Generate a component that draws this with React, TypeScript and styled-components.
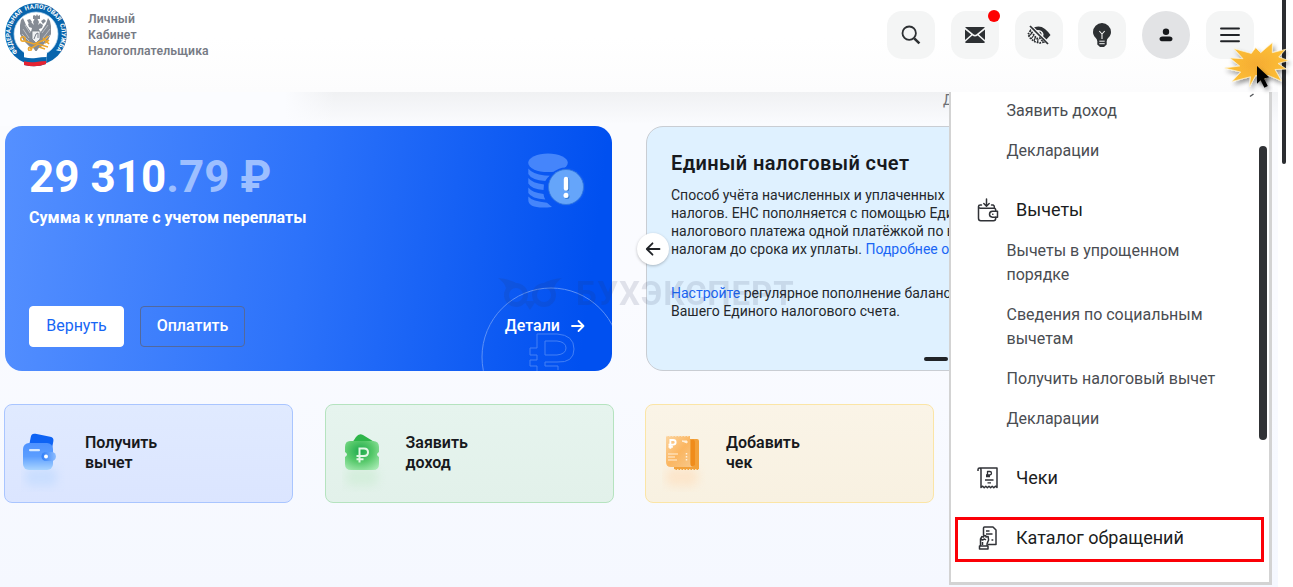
import React from 'react';
import styled, { createGlobalStyle } from 'styled-components';

const Global = createGlobalStyle`
  * { box-sizing: border-box; }
  body { margin: 0; background: #fff; font-family: Roboto, "Liberation Sans", sans-serif; color: #17191d; overflow: hidden; }
  button { font-family: inherit; cursor: pointer; }
  svg { display: block; flex: none; }
`;

const Screen = styled.div`
  position: relative;
  width: 1293px;
  height: 587px;
  overflow: hidden;
  background: #fff;
`;

const Page = styled.div`
  width: 1278px;
  height: 587px;
  display: flex;
  flex-direction: column;
  overflow: hidden;
`;

const Header = styled.header`
  flex: none;
  height: 92px;
  padding: 3px 24px 0 5px;
  display: flex;
  justify-content: space-between;
  background: linear-gradient(#fff 40%, #fcfcfd);
`;

const Brand = styled.div`
  display: flex;
  align-items: flex-start;
  gap: 21px;
`;

const BrandName = styled.div`
  margin-top: 8px;
  font-size: 12.2px;
  line-height: 16px;
  font-weight: 600;
  letter-spacing: 0.15px;
  color: #777b85;
`;

const Actions = styled.nav`
  display: flex;
  gap: 15.8px;
  padding-top: 8px;
`;

const IconButton = styled.button<{ $round?: boolean }>`
  position: relative;
  width: 48px;
  height: 48px;
  padding: 0;
  border: 0;
  border-radius: ${p => (p.$round ? '50%' : '15px')};
  background: ${p => (p.$round ? '#e2e3e5' : '#f4f5f5')};
  display: flex;
  align-items: center;
  justify-content: center;
`;

const Unread = styled.span`
  position: absolute;
  top: -1px;
  right: -1px;
  width: 12px;
  height: 12px;
  border-radius: 50%;
  background: #fe0000;
`;

const Main = styled.main`
  flex: 1;
  padding: 34px 0 0 5px;
  background:
    linear-gradient(90deg, #fbfcff 285px, rgba(251, 252, 255, 0) 335px) 0 0 / 335px 34px no-repeat,
    linear-gradient(#f0f1f3, #fafbfe 32px, #fafbff 40%, #f5f8ff);
`;

const Summary = styled.section`
  display: flex;
  gap: 34px;
`;

const DebtCard = styled.article`
  position: relative;
  flex: none;
  width: 607px;
  height: 244.5px;
  padding: 26px 27px 24px 24px;
  border-radius: 17px;
  overflow: hidden;
  display: flex;
  flex-direction: column;
  justify-content: space-between;
  color: #fff;
  background: linear-gradient(97deg, #5590ff 0%, #2c72fa 49%, #0050f0 95%);
`;

const CardRow = styled.div<{ $bottom?: boolean }>`
  position: relative;
  display: flex;
  justify-content: space-between;
  align-items: ${p => (p.$bottom ? 'center' : 'flex-start')};
`;

const Amount = styled.div`
  font-size: 44px;
  line-height: 50px;
  font-weight: 700;
  white-space: nowrap;
  span { color: #9dbfff; }
`;

const AmountNote = styled.div`
  margin-top: 6px;
  font-size: 16px;
  line-height: 20px;
  font-weight: 700;
`;

const CoinsSlot = styled.div`
  padding-top: 1px;
`;

const CardButtons = styled.div`
  display: flex;
  gap: 16px;
`;

const CardButton = styled.button<{ $filled?: boolean }>`
  width: ${p => (p.$filled ? '95px' : '105px')};
  height: 41px;
  padding: 0 0 1px;
  border-radius: 4px;
  border: 1px solid ${p => (p.$filled ? '#fff' : '#53699c')};
  background: ${p => (p.$filled ? '#fff' : 'transparent')};
  color: ${p => (p.$filled ? '#1766f5' : '#fff')};
  font-size: 16px;
  font-weight: ${p => (p.$filled ? 400 : 500)};
`;

const DetailsLink = styled.a`
  display: flex;
  align-items: center;
  gap: 10px;
  padding: 0 0 1px;
  margin-right: -1px;
  font-size: 16px;
  font-weight: 500;
`;

const CoinOutline = styled.svg`
  position: absolute;
  left: 476px;
  top: 161px;
`;

const AccountCard = styled.article`
  position: relative;
  flex: none;
  width: 607px;
  height: 244.5px;
  padding: 24px;
  border: 1px solid #c9cdd3;
  border-radius: 17px;
  background: #dff1ff;
`;

const AccountTitle = styled.h2`
  margin: 0 0 10px;
  font-size: 20px;
  line-height: 25px;
  font-weight: 600;
  letter-spacing: 0.42px;
`;

const Paragraph = styled.p`
  margin: 0 0 26px;
  font-size: 14px;
  line-height: 18px;
  color: #25282c;
  white-space: nowrap;
  a { color: #1a66f5; }
`;

const BackButton = styled.button`
  position: absolute;
  left: -10px;
  top: 106px;
  width: 32px;
  height: 32px;
  padding: 0;
  border: 0;
  border-radius: 50%;
  background: #fff;
  box-shadow: 0 1px 3px rgba(0, 0, 0, 0.25);
  display: flex;
  align-items: center;
  justify-content: center;
`;

const SlideMark = styled.span`
  position: absolute;
  left: 277px;
  bottom: 9px;
  width: 24px;
  height: 4px;
  border-radius: 2px;
  background: #202327;
`;

const Tiles = styled.section`
  margin: 33px 0 0 -1px;
  display: flex;
  gap: 31.5px;
`;

const Tile = styled.article<{ $line: string; $from: string; $to: string }>`
  width: 289px;
  height: 99.5px;
  padding: 0 16px;
  border: 1px solid ${p => p.$line};
  border-radius: 8px;
  background: linear-gradient(${p => p.$from}, ${p => p.$to});
  display: flex;
  align-items: center;
  gap: 20px;
  svg { margin-top: 6px; }
`;

const TileTitle = styled.h3`
  margin: 0 0 1px;
  font-size: 16px;
  line-height: 20px;
  font-weight: 600;
`;

const Watermark = styled.div`
  position: absolute;
  left: 498px;
  top: 274px;
  display: flex;
  align-items: center;
  gap: 14px;
  font-size: 33px;
  line-height: 39px;
  font-weight: 700;
  letter-spacing: 0.9px;
  color: #28325a;
  opacity: 0.12;
  pointer-events: none;
`;

const Hidden = styled.div`
  position: absolute;
  left: 943px;
  top: 92px;
  font-size: 14px;
  line-height: 16px;
  color: #6c6f75;
`;

const Menu = styled.aside`
  position: absolute;
  left: 949px;
  top: 92px;
  width: 323px;
  height: 493px;
  padding: 7px 4px 0 4px;
  border: solid #d3d3d3;
  border-width: 0 3px 3px 2px;
  background: #fff;
`;

const MenuItem = styled.a`
  display: block;
  margin: 0 20px 16px 51.5px;
  font-size: 16px;
  line-height: 24px;
  color: #4a4d52;
`;

const MenuHeading = styled.a<{ $first?: boolean; $framed?: boolean }>`
  display: flex;
  align-items: center;
  gap: 17px;
  height: ${p => (p.$framed ? '45px' : '30px')};
  width: 309px;
  margin: ${p => (p.$framed ? '24px 0 0' : p.$first ? '32px 0 14px' : '32px 0 0')};
  padding: ${p => (p.$framed ? '0 0 4px 19px' : '0 0 0 22px')};
  border: ${p => (p.$framed ? '3px solid #fb0007' : '0')};
  font-size: 18px;
  line-height: 24px;
  color: #1b1d21;
`;

const MenuScroll = styled.span`
  position: absolute;
  right: 2px;
  top: 54px;
  width: 8px;
  height: 294px;
  border-radius: 4px;
  background: #303235;
`;

const CollapseMark = styled.svg`
  position: absolute;
  right: 14px;
  top: 0;
`;

const PageScroll = styled.span`
  position: absolute;
  left: 1282px;
  top: -4px;
  width: 4px;
  height: 168px;
  border-radius: 2px;
  background: #2b2d31;
`;

const Burst = styled.svg`
  position: absolute;
  left: 1222px;
  top: 40px;
`;

const Emblem = () => (
  <svg width="62" height="64" viewBox="0 0 62 64">
    <circle cx="31" cy="31" r="30.8" fill="#0865ad" />
    <circle cx="31" cy="31" r="22" fill="#fff" stroke="#b8d7ee" strokeWidth="0.7" />
    <defs>
      <path id="ring" d="M13.500 49.800A25.600 25.600 0 1 1 49.100 49.300" />
      <clipPath id="badge"><path d="M19 49Q28 46 42 50L41 61Q31 65 19 62Z" /></clipPath>
    </defs>
    <text fontSize="6.2" fontWeight="700" fill="#fff" fontFamily="Roboto, sans-serif" wordSpacing="1.500">
      <textPath href="#ring" startOffset="1" textLength="117">ФЕДЕРАЛЬНАЯ НАЛОГОВАЯ СЛУЖБА</textPath>
    </text>
    <g fill="#858b94">
      <path d="M29 22l-1-3 2-4h2l2 4-1 3 2-2 3 2-1 3-3 1 1 4 6-9 2-6 2 3 1 5 0 8-3 6-5 5-2 2-5 2-6-2-6-6-4-7 0-9 1-5 2-2 3 7 5 7 1-4-3-1-1-3 3-2z" />
      <path d="M28 13l1-1 2 1 1-2 1 2 2-1 0 4h-7zM22 17l3-1 2 3-3 2zM36 18l3-2 2 2-3 3zM27 43h8l-4 6z" />
    </g>
    <path d="M18 26l6 9M17 31l7 7M45 26l-7 9M45 32l-7 7M20 22l5 8M43 22l-6 8" stroke="#d3d6da" strokeWidth="0.7" />
    <path d="M27 28h8v8l-4 4-4-4z" fill="#f0f2f4" stroke="#777d87" strokeWidth="0.8" />
    <path d="M29 36l2-5 2-1 0 5" fill="none" stroke="#777d87" />
    <g fill="none" stroke="#eca62d" strokeWidth="1.6">
      <circle cx="18" cy="36" r="2.2" /><path d="M20 38l9 3 10-4 4-4M25 46l8-5 10 3M38 35l6 6M40 40l4-3M34 44l6 2" />
      <circle cx="25" cy="46" r="1.6" />
    </g>
    <g clipPath="url(#badge)">
      <path d="M18 44h26v20H18z" fill="#fff" />
      <path d="M18 54q7 2 13 1t13-1v11H18z" fill="#0865ad" />
      <path d="M18 58q7 2 13 1t13-1v8H18z" fill="#e52332" />
    </g>
  </svg>
);

const SearchIcon = () => (
  <svg width="22" height="22" viewBox="0 0 22 22" fill="none" stroke="#2d3033">
    <circle cx="9.200" cy="9.200" r="6.700" strokeWidth="1.800" /><path d="M14.200 14.400l5.200 5" strokeWidth="2.600" />
  </svg>
);

const MailIcon = () => (
  <svg width="20" height="16" viewBox="0 0 20 16" fill="#2d3033">
    <path d="M1 0h18q.7 0 .8.6L11.5 7.2q-1.500 1-3 0L.2.6Q.4 0 1 0zM0 2.600L6.200 7.500 0 13zM20 2.600L13.800 7.500 20 13zM7.300 8.500q2.700 1.800 5.400 0L20 14.900q-.3 1.100-1.500 1.100h-17Q.3 16 0 14.900z" />
  </svg>
);

const EyeIcon = () => (
  <svg width="26" height="20" viewBox="0 0 26 20">
    <path d="M6 3.500Q13-.5 19 4q3 2.500 5.500 6l-5 5.500-3-3q2-3-.5-5.500-2-1.500-4.500-.5z" fill="#2d3033" />
    <path d="M11 5q5-.5 6.500 4l-1 3-2.500-2.500q0-2-2.500-2z" fill="#f4f5f5" />
    <path d="M13.500 6.500q2.500 1 2 3.500l-1.200-1q0-1-1-1.500z" fill="#2d3033" />
    <path d="M4.500 5.500L2 9.500l2.500 4 4 3 5 1.500 4-1-4-4-3 .5-3-4z" fill="none" stroke="#2d3033" strokeWidth="1.700" strokeDasharray="1.700 1.100" />
    <path d="M3 11l3-3M5 14l3-4M8 16l1.500-4M11.500 18l.5-4" stroke="#2d3033" strokeWidth="1.200" />
    <path d="M5.500.8L23 18" stroke="#f4f5f5" strokeWidth="1.500" />
    <path d="M4 1l18 18" stroke="#2d3033" strokeWidth="1.700" />
  </svg>
);

const BulbIcon = () => (
  <svg width="20" height="26" viewBox="0 0 20 26">
    <path d="M10 1a9 9 0 0 1 9 9c0 4.500-3.500 5.500-4.500 9h-9C4.500 15.500 1 14.500 1 10a9 9 0 0 1 9-9z" fill="#2d3033" />
    <path d="M7.300 9l2.700 3 2.700-3M10 12v5" fill="none" stroke="#f4f5f5" strokeWidth="1.100" />
    <path d="M5.300 17h9.400v5.500L12 25H8l-2.700-2.500z" fill="#2d3033" />
    <path d="M7.300 19.200h5.400M7.300 21.700h5.400" stroke="#f4f5f5" strokeWidth="1" />
  </svg>
);

const UserIcon = () => (
  <svg width="14" height="14" viewBox="0 0 14 14" fill="#16181b">
    <circle cx="7" cy="3.700" r="3.200" /><path d="M3.500 8.500h7q3 .4 3 2.600 0 2.100-2 2.100h-9q-2 0-2-2.100 0-2.200 3-2.600z" />
  </svg>
);

const BurgerIcon = () => (
  <svg width="20" height="16" viewBox="0 0 20 16" stroke="#202327" strokeWidth="1.900" strokeLinecap="round">
    <path d="M1 1.500h18M1 8h18M1 14.300h18" />
  </svg>
);

const CoinsIcon = () => (
  <svg width="57" height="56" viewBox="0 0 57 56">
    <g fill="#4585fb">
      <ellipse cx="20" cy="9.800" rx="19.800" ry="9.300" />
      <path d="M.3 15.500q4 5.500 16.500 7l5 .3q-3 2.200-4.500 5.200Q3.500 27 .3 21zM.3 25q4 5 15.700 6.500l-.5 5.500Q3.500 36 .3 30.500zM.3 34.500Q4 39.500 15.500 41q.3 3 1.800 5.500Q3.500 45.500.3 40zM.3 43.500q4 5 18.700 6.200l5 4.300Q.3 56.500.3 47z" />
    </g>
    <circle cx="38" cy="34" r="19.500" fill="#0a57f2" />
    <circle cx="38" cy="34" r="17.500" fill="#65a5fa" stroke="#3478dc" strokeWidth="0.800" />
    <g transform="translate(1 1)" stroke="#377bd0" strokeLinecap="round"><path d="M38 26v9" strokeWidth="4.500" /><path d="M38 42.500v.1" strokeWidth="5" /></g>
    <g stroke="#fff" strokeLinecap="round"><path d="M38 26v9.500" strokeWidth="4.400" /><path d="M38 42.300v.1" strokeWidth="5" /></g>
  </svg>
);

const WalletTileIcon = () => (
  <svg width="44" height="72" viewBox="0 0 44 72">
    <defs>
      <linearGradient id="wb" x2="0" y2="1"><stop stopColor="#4e92ff" /><stop offset=".5" stopColor="#5c9eff" /><stop offset="1" stopColor="#a9d4ff" /></linearGradient>
      <linearGradient id="wl"><stop stopColor="#2e7df8" /><stop offset="1" stopColor="#8ebdff" /></linearGradient>
      <filter id="soft" x="-50%" y="-50%" width="200%" height="200%"><feGaussianBlur stdDeviation="5" /></filter>
    </defs>
    <rect x="4" y="48" width="32" height="18" rx="6" fill="#b7d6ff" opacity=".5" filter="url(#soft)" />
    <rect x="9" y="15" width="23" height="18" rx="4" transform="rotate(11 20 22)" fill="#0e63f4" />
    <rect x="2" y="23" width="30" height="27" rx="6" fill="url(#wb)" />
    <rect x="8" y="29" width="11" height="2.300" rx="1" fill="#d7eaff" />
    <rect x="20.500" y="32" width="14.500" height="9" rx="4.500" fill="url(#wl)" />
    <circle cx="25" cy="36.500" r="2" fill="#fff" />
  </svg>
);

const RublePath = ({ color, width = 2 }: { color: string; width?: number }) => (
  <path d="M3 14V0h4.500q4 0 4 3.700t-4 3.800H0M0 10.800h7" fill="none" stroke={color} strokeWidth={width} />
);

const IncomeTileIcon = () => (
  <svg width="44" height="72" viewBox="0 0 44 72">
    <defs>
      <radialGradient id="ib" cx=".45" cy=".35" r=".75"><stop stopColor="#1daa4c" /><stop offset=".5" stopColor="#57c96b" /><stop offset="1" stopColor="#a4e9b0" /></radialGradient>
    </defs>
    <rect x="4" y="48" width="32" height="18" rx="6" fill="#bfe9c6" opacity=".4" filter="url(#soft)" />
    <path d="M10 23l4-6q3-4 7-2l13 8z" fill="#2eb54a" />
    <path d="M8 21h23q6 0 6 6v5q-4 2.500 0 5v7q0 6-6 6H9q-6 0-6-6v-7q4-2.500 0-5v-5q0-6 5-6z" fill="url(#ib)" />
    <g transform="translate(14.500 28.500)"><RublePath color="#e3f8e6" /></g>
  </svg>
);

const ReceiptTileIcon = () => (
  <svg width="44" height="72" viewBox="0 0 44 72">
    <defs>
      <linearGradient id="rb" x2="1" y2="1"><stop stopColor="#fcd5a0" /><stop offset=".5" stopColor="#fbb661" /><stop offset="1" stopColor="#f7c98c" /></linearGradient>
    </defs>
    <rect x="4" y="48" width="32" height="18" rx="6" fill="#ffdcb8" opacity=".55" filter="url(#soft)" />
    <path d="M12 19h23q2 0 2 2v29H12z" fill="#f2a13a" />
    <path d="M12 49.500h25" stroke="#f7e5c4" strokeDasharray="1.500 1.500" strokeWidth="1" />
    <path d="M29 20q4-2 4 3v22l-4 2z" fill="#f08c1b" />
    <path d="M4 16h24v27q0 4 4 4H9q-5 0-5-5z" fill="url(#rb)" />
    <path d="M4 16h24" stroke="#f9efdd" strokeDasharray="1.500 1.500" />
    <g transform="translate(6.500 20) scale(.62)"><RublePath color="#fff" width={3} /></g>
    <path d="M6 34h10M6 37h7M6 40h9" stroke="#fff0da" strokeWidth="1" />
    <path d="M20 21h5v2z" fill="#fff0da" stroke="#fff0da" />
    <path d="M24.500 33v8" stroke="#fff0da" strokeDasharray="1.500 1.500" strokeWidth="1.500" />
  </svg>
);

const DeductIcon = () => (
  <svg width="22" height="24" viewBox="0 0 22 24" fill="none" stroke="#303237" strokeWidth="1.500" strokeLinecap="round" strokeLinejoin="round">
    <path d="M9.500 1v7M6.800 5.500l2.700 2.700 2.700-2.700M4.500 7H3.300Q1.500 7 1.500 8.500T3.300 10.200H17q1.700 0 1.700 1.800v1.200M1.500 8.500v11.700q0 2.500 2.300 2.500H16.500q2.200 0 2.200-2.500v-1M14.500 7h1.700q1.300.4 1.300 3" />
    <path d="M20.500 13.300h-5q-3 .3-3 3t3 3h5zM15.700 16.300h.2" />
  </svg>
);

const ReceiptIcon = () => (
  <svg width="22" height="24" viewBox="0 0 22 24" fill="none" stroke="#303237" strokeWidth="1.500" strokeLinejoin="round">
    <path d="M1 5V3.500Q1 2 2.700 2H20v19.500l-1.600-1.300-1.600 1.500-1.600-1.500-1.600 1.500-1.600-1.500-1.600 1.500-1.600-1.500-1.600 1.500-1.500-1.500L4 21.500V4Q4 2 2.700 2" />
    <path d="M10.500 11.300V5.500h2.200q1.800 0 1.800 1.700T12.700 9H9M9 10.500h4M8 14h8.500M10.500 16.800h3.500" strokeWidth="1.300" />
  </svg>
);

const AppealIcon = () => (
  <svg width="22" height="24" viewBox="0 0 22 24" fill="none" stroke="#303237" strokeWidth="1.500" strokeLinejoin="round">
    <path d="M6.500 9V2q0-1 1-1h8.500l3 3v14.500H11M9 5h3.500M9 8h6.500M14.500 14h1.800" />
    <path d="M3.500 20v-7l1.500-2.500 1.500.5.300-1.500 2 .2.300 1.300 2-.5.500 3.500-1.500 3.500V20M3.500 13l2 1 2-1 1.500 1M2.500 20h8.500v3H2.500zM5.500 16v3" />
  </svg>
);

const Arrow = ({ left }: { left?: boolean }) => (
  <svg width="16" height="16" viewBox="0 0 16 16" fill="none" stroke={left ? '#202327' : '#fff'} strokeWidth="1.800" strokeLinecap="round" strokeLinejoin="round">
    {left ? <path d="M14.500 8H2M7.500 2.300L1.800 8l5.700 5.700" /> : <path d="M2 8h11.500M8.500 3l5 5-5 5" />}
  </svg>
);

const actions = [
  { icon: <SearchIcon />, label: 'search' },
  { icon: <MailIcon />, label: 'mail', unread: true },
  { icon: <EyeIcon />, label: 'contrast' },
  { icon: <BulbIcon />, label: 'hints' },
  { icon: <UserIcon />, label: 'profile', round: true },
  { icon: <BurgerIcon />, label: 'menu' },
];

const tiles = [
  { icon: <WalletTileIcon />, a: 'Получить', b: 'вычет', line: '#a9c5ff', from: '#e0eaff', to: '#dbe5ff' },
  { icon: <IncomeTileIcon />, a: 'Заявить', b: 'доход', line: '#b5e3bf', from: '#e6f4ee', to: '#e2f1ea' },
  { icon: <ReceiptTileIcon />, a: 'Добавить', b: 'чек', line: '#fbe5a6', from: '#faf4e7', to: '#f8f1e1' },
];

export default function App() {
  return (
    <Screen>
      <Global />
      <Page>
        <Header>
          <Brand>
            <Emblem />
            <BrandName>Личный<br />Кабинет<br />Налогоплательщика</BrandName>
          </Brand>
          <Actions>
            {actions.map(a => (
              <IconButton key={a.label} aria-label={a.label} $round={a.round}>
                {a.icon}
                {a.unread && <Unread />}
              </IconButton>
            ))}
          </Actions>
        </Header>
        <Main>
          <Summary>
            <DebtCard>
              <CoinOutline width="131" height="84" viewBox="0 0 131 84" fill="none" stroke="#5d91f6">
                <circle cx="70" cy="70" r="69" />
                <path d="M56 84v-5h-7v-6h7v-5h-7v-7h7V47h20q17 1 17 15T76 75H64v4h13v4M64 68V54h12q9 1 9 7t-9 7z" stroke="#4480f5" />
              </CoinOutline>
              <CardRow>
                <div>
                  <Amount>29 310<span>.79 ₽</span></Amount>
                  <AmountNote>Сумма к уплате с учетом переплаты</AmountNote>
                </div>
                <CoinsSlot><CoinsIcon /></CoinsSlot>
              </CardRow>
              <CardRow $bottom>
                <CardButtons>
                  <CardButton $filled>Вернуть</CardButton>
                  <CardButton>Оплатить</CardButton>
                </CardButtons>
                <DetailsLink>Детали <Arrow /></DetailsLink>
              </CardRow>
            </DebtCard>
            <AccountCard>
              <AccountTitle>Единый налоговый счет</AccountTitle>
              <Paragraph>
                Способ учёта начисленных и уплаченных<br />
                налогов. ЕНС пополняется с помощью Единого<br />
                налогового платежа одной платёжкой по всем<br />
                налогам до срока их уплаты. <a>Подробнее о ЕНС</a>
              </Paragraph>
              <Paragraph>
                <a>Настройте</a> регулярное пополнение баланса<br />
                Вашего Единого налогового счета.
              </Paragraph>
              <BackButton aria-label="back"><Arrow left /></BackButton>
              <SlideMark />
            </AccountCard>
          </Summary>
          <Tiles>
            {tiles.map(t => (
              <Tile key={t.a} $line={t.line} $from={t.from} $to={t.to}>
                {t.icon}
                <TileTitle>{t.a}<br />{t.b}</TileTitle>
              </Tile>
            ))}
          </Tiles>
        </Main>
      </Page>
      <Watermark>
        <svg width="64" height="34" viewBox="0 0 64 34" fill="none" stroke="#28325a" strokeWidth="5">
          <circle cx="18" cy="18" r="9.500" /><circle cx="46" cy="18" r="9.500" />
          <path d="M0 1q12 1 20 6l-12 4Q6 5 0 1zM64 1q-12 1-20 6l12 4q2-6 8-10zM26 24l6 9 6-9z" fill="#28325a" stroke="none" />
        </svg>
        БУХЭКСПЕРТ
      </Watermark>
      <Hidden>Д</Hidden>
      <Menu>
        <MenuItem>Заявить доход</MenuItem>
        <MenuItem>Декларации</MenuItem>
        <MenuHeading $first><DeductIcon />Вычеты</MenuHeading>
        <MenuItem>Вычеты в упрощенном<br />порядке</MenuItem>
        <MenuItem>Сведения по социальным<br />вычетам</MenuItem>
        <MenuItem>Получить налоговый вычет</MenuItem>
        <MenuItem>Декларации</MenuItem>
        <MenuHeading><ReceiptIcon />Чеки</MenuHeading>
        <MenuHeading $framed><AppealIcon />Каталог обращений</MenuHeading>
        <MenuScroll />
        <CollapseMark width="6" height="6" viewBox="0 0 6 6"><path d="M1 4.500L4.500 2" stroke="#55585c" strokeWidth="1.500" /></CollapseMark>
      </Menu>
      <PageScroll />
      <Burst width="71" height="60" viewBox="0 0 71 60">
        <defs>
          <filter id="drop" x="-20%" y="-20%" width="150%" height="150%"><feDropShadow dx="2" dy="3" stdDeviation="2" floodOpacity=".4" /></filter>
          <radialGradient id="sun"><stop stopColor="#f5ac33" /><stop offset="1" stopColor="#fdbf35" /></radialGradient>
        </defs>
        <path filter="url(#drop)" fill="url(#sun)" stroke="#fff4d0" strokeWidth="0.700" d="M12 8.700L29.300 13.500 33.700 7.700 38.700 12.700 50.300 2.700 50.300 12.700 63.700 9.300 56.700 17 66.500 20.500 56 23.500 64.300 29 53 29.500 59.500 41 46 35.300 40 42 34 35 27.500 46.700 28.500 36.700 10 41.500 18.700 32 2.700 28 17.700 26 8 18 21 18.700z" />
        <path filter="url(#drop)" d="M35 26v17.800l3.600-3.500 3.800 7.400 3.400-1.800-3.800-7.300 5-1.400z" fill="#050505" />
      </Burst>
    </Screen>
  );
}
